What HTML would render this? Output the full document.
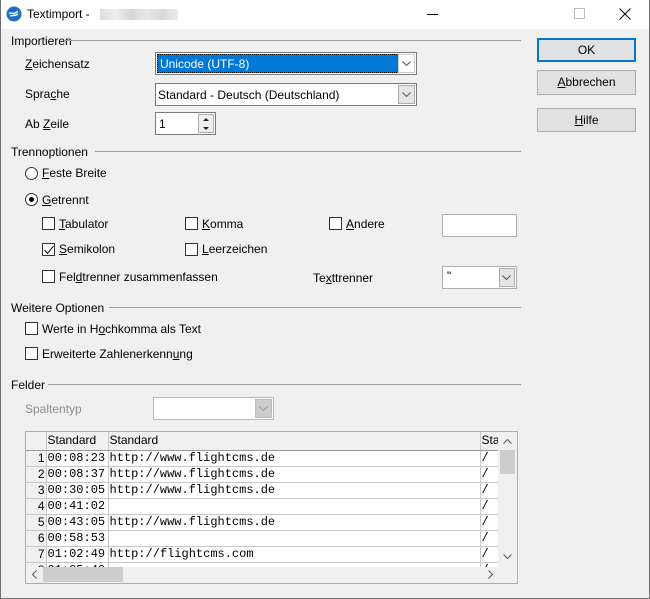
<!DOCTYPE html>
<html><head><meta charset="utf-8"><style>
*{box-sizing:border-box;margin:0;padding:0}
body{width:650px;height:599px;overflow:hidden;background:#f0f0f0;font-family:"Liberation Sans",sans-serif;font-size:12px;color:#000;position:relative}
.a{position:absolute;white-space:nowrap}
.win{position:absolute;left:0;top:0;width:650px;height:599px;border:1px solid #707070;border-top:none}
.tb{position:absolute;left:0;top:0;width:650px;height:29px;background:#fff}
.lbl{position:absolute;line-height:14px;white-space:nowrap}
.line{position:absolute;height:1px;background:#a0a0a0}
.cb{position:absolute;width:13px;height:13px;border:1px solid #333;background:#fff}
.rb{position:absolute;width:13px;height:13px;border:1px solid #333;border-radius:50%;background:#fff}
.combo{position:absolute;border:1px solid #7a7a7a;background:#fff}
.arr{position:absolute;right:1px;top:1px;bottom:1px;width:17px;background:#e5e5e5;border:1px solid #adadad}
.btn{position:absolute;left:537px;width:99px;border:1px solid #adadad;background:#e1e1e1;text-align:center}
u{text-decoration:underline}
table{border-collapse:collapse;font-family:"Liberation Mono",monospace;font-size:12px}
.grid td{height:16px;border-bottom:1px solid #c8c8c8;border-right:1px solid #c8c8c8;padding:0 1px;line-height:15px;background:#fff;overflow:hidden;white-space:nowrap}
</style></head><body>
<div class="tb"></div>
<svg class="a" style="left:6px;top:6px" width="16" height="16" viewBox="0 0 16 16"><circle cx="8" cy="8" r="7.5" fill="#1c6fc2"/><path d="M3 7.5c2-1.5 4 1 6-0.5l3-1.5M4 10c2-1 4 0.5 8-2" stroke="#fff" stroke-width="1.4" fill="none"/></svg>
<div class="lbl" style="left:27px;top:7px;font-size:12px">Textimport -</div>
<div class="a" style="left:100px;top:9px;width:78px;height:11px;background:linear-gradient(90deg,#ddd,#eee 20%,#d5d5d5 40%,#e8e8e8 60%,#d8d8d8 80%,#eee);"></div>
<div class="a" style="left:427px;top:14px;width:11px;height:1px;background:#000"></div>
<div class="a" style="left:574px;top:8px;width:11px;height:11px;border:1px solid #bbb"></div>
<svg class="a" style="left:619px;top:8px" width="12" height="12"><path d="M0.5 0.5L11.5 11.5M11.5 0.5L0.5 11.5" stroke="#000" stroke-width="1"/></svg>

<div class="lbl" style="left:11px;top:34px">Importieren</div><div class="line" style="left:64px;top:40px;width:457px"></div>
<div class="lbl" style="left:25px;top:57px"><u>Z</u>eichensatz</div>
<div class="combo" style="left:155px;top:52px;width:262px;height:23px"><div class="a" style="left:1px;top:1px;width:242px;height:19px;background:#0078d7;border:1px dotted #000;color:#fff;padding:2px 0 0 2px">Unicode (UTF-8)</div><div class="arr" style="background:#fff;border-color:#ccc"></div><svg class="a" style="right:5px;top:8px" width="9" height="5"><path d="M0.5 0.5L4.5 4.5L8.5 0.5" stroke="#555" fill="none"/></svg></div>
<div class="lbl" style="left:25px;top:87px">Spra<u>c</u>he</div>
<div class="combo" style="left:155px;top:83px;width:262px;height:23px"><div class="lbl" style="left:2px;top:4px">Standard - Deutsch (Deutschland)</div><div class="arr"></div><svg class="a" style="right:5px;top:8px" width="9" height="5"><path d="M0.5 0.5L4.5 4.5L8.5 0.5" stroke="#555" fill="none"/></svg></div>
<div class="lbl" style="left:25px;top:117px">Ab <u>Z</u>eile</div>
<div class="combo" style="left:155px;top:112px;width:61px;height:23px"><div class="lbl" style="left:3px;top:4px">1</div><div class="a" style="left:42px;top:1px;width:16px;height:19px;border:1px solid #adadad;background:#f0f0f0"></div><svg class="a" style="left:46px;top:4px" width="8" height="14"><path d="M1 4L4 1L7 4ZM1 10L4 13L7 10Z" fill="#222"/></svg></div>

<div class="btn" style="top:38px;height:24px;border:2px solid #0078d7;line-height:20px">OK</div>
<div class="btn" style="top:70px;height:25px;line-height:23px"><u>A</u>bbrechen</div>
<div class="btn" style="top:108px;height:24px;line-height:22px"><u>H</u>ilfe</div>

<div class="lbl" style="left:11px;top:145px">Trennoptionen</div><div class="line" style="left:95px;top:151px;width:426px"></div>
<div class="rb" style="left:25px;top:167px"></div><div class="lbl" style="left:42px;top:166px"><u>F</u>este Breite</div>
<div class="rb" style="left:25px;top:193px"><div class="a" style="left:3px;top:3px;width:5px;height:5px;border-radius:50%;background:#000"></div></div><div class="lbl" style="left:42px;top:193px"><u>G</u>etrennt</div>
<div class="cb" style="left:42px;top:217px"></div><div class="lbl" style="left:59px;top:217px"><u>T</u>abulator</div>
<div class="cb" style="left:185px;top:217px"></div><div class="lbl" style="left:202px;top:217px"><u>K</u>omma</div>
<div class="cb" style="left:329px;top:217px"></div><div class="lbl" style="left:346px;top:217px"><u>A</u>ndere</div>
<div class="combo" style="left:442px;top:214px;width:75px;height:23px;border-color:#adadad"></div>
<div class="cb" style="left:42px;top:243px"><svg class="a" style="left:1px;top:1px" width="10" height="10"><path d="M0.5 5L3.5 8.5L9.5 1" stroke="#000" fill="none"/></svg></div><div class="lbl" style="left:59px;top:242px"><u>S</u>emikolon</div>
<div class="cb" style="left:185px;top:243px"></div><div class="lbl" style="left:202px;top:242px"><u>L</u>eerzeichen</div>
<div class="cb" style="left:42px;top:270px"></div><div class="lbl" style="left:59px;top:270px">Fel<u>d</u>trenner zusammenfassen</div>
<div class="lbl" style="left:313px;top:271px">Te<u>x</u>ttrenner</div>
<div class="combo" style="left:442px;top:266px;width:75px;height:23px;border-color:#adadad"><div class="lbl" style="left:4px;top:2px">"</div><div class="arr" style="width:16px"></div><svg class="a" style="right:5px;top:8px" width="9" height="5"><path d="M0.5 0.5L4.5 4.5L8.5 0.5" stroke="#555" fill="none"/></svg></div>

<div class="lbl" style="left:11px;top:301px">Weitere Optionen</div><div class="line" style="left:109px;top:307px;width:412px"></div>
<div class="cb" style="left:25px;top:322px"></div><div class="lbl" style="left:42px;top:322px">Werte in H<u>o</u>chkomma als Text</div>
<div class="cb" style="left:25px;top:347px"></div><div class="lbl" style="left:42px;top:347px">Erweiterte Zahlenerkenn<u>u</u>ng</div>

<div class="lbl" style="left:11px;top:378px">Felder</div><div class="line" style="left:48px;top:384px;width:473px"></div>
<div class="lbl" style="left:25px;top:402px;color:#8d8d8d">Spaltentyp</div>
<div class="combo" style="left:153px;top:397px;width:121px;height:23px;border-color:#bbb"><div class="arr" style="background:#ccc;border-color:#bbb"></div><svg class="a" style="right:5px;top:8px" width="9" height="5"><path d="M0.5 0.5L4.5 4.5L8.5 0.5" stroke="#999" fill="none"/></svg></div>

<div class="a" style="left:25px;top:431px;width:493px;height:153px;border:1px solid #adadad;background:#f0f0f0;overflow:hidden">
<div class="a" style="left:0;top:0;width:472px;height:135px;overflow:hidden">
<table class="grid" style="width:480px;table-layout:fixed">
<colgroup><col style="width:20px"><col style="width:62px"><col style="width:372px"><col style="width:26px"></colgroup>
<tr style="font-family:'Liberation Sans',sans-serif"><td style="background:#f0f0f0;border-bottom:1px solid #999;height:18px">&nbsp;</td><td style="background:#f0f0f0;border-bottom:1px solid #999">Standard</td><td style="background:#f0f0f0;border-bottom:1px solid #999">Standard</td><td style="background:#f0f0f0;border-bottom:1px solid #999">Sta</td></tr>
<tr><td style="font-family:'Liberation Sans';text-align:right;background:#f0f0f0">1</td><td>00:08:23</td><td>http://www.flightcms.de</td><td>/</td></tr>
<tr><td style="font-family:'Liberation Sans';text-align:right;background:#f0f0f0">2</td><td>00:08:37</td><td>http://www.flightcms.de</td><td>/</td></tr>
<tr><td style="font-family:'Liberation Sans';text-align:right;background:#f0f0f0">3</td><td>00:30:05</td><td>http://www.flightcms.de</td><td>/</td></tr>
<tr><td style="font-family:'Liberation Sans';text-align:right;background:#f0f0f0">4</td><td>00:41:02</td><td></td><td>/</td></tr>
<tr><td style="font-family:'Liberation Sans';text-align:right;background:#f0f0f0">5</td><td>00:43:05</td><td>http://www.flightcms.de</td><td>/</td></tr>
<tr><td style="font-family:'Liberation Sans';text-align:right;background:#f0f0f0">6</td><td>00:58:53</td><td></td><td>/</td></tr>
<tr><td style="font-family:'Liberation Sans';text-align:right;background:#f0f0f0">7</td><td>01:02:49</td><td>http://flightcms.com</td><td>/</td></tr>
<tr><td style="font-family:'Liberation Sans';text-align:right;background:#f0f0f0">8</td><td>01:05:40</td><td></td><td>/</td></tr>
</table></div>
<div class="a" style="left:474px;top:18px;width:15px;height:24px;background:#cdcdcd"></div>
<svg class="a" style="left:477px;top:7px" width="9" height="5"><path d="M0.5 4.5L4.5 0.5L8.5 4.5" stroke="#555" fill="none"/></svg>
<svg class="a" style="left:477px;top:122px" width="9" height="5"><path d="M0.5 0.5L4.5 4.5L8.5 0.5" stroke="#555" fill="none"/></svg>
<div class="a" style="left:17px;top:135px;width:80px;height:15px;background:#cdcdcd"></div>
<svg class="a" style="left:6px;top:138px" width="5" height="9"><path d="M4.5 0.5L0.5 4.5L4.5 8.5" stroke="#555" fill="none"/></svg>
<svg class="a" style="left:462px;top:138px" width="5" height="9"><path d="M0.5 0.5L4.5 4.5L0.5 8.5" stroke="#555" fill="none"/></svg>
</div>
<div class="win"></div>
</body></html>
